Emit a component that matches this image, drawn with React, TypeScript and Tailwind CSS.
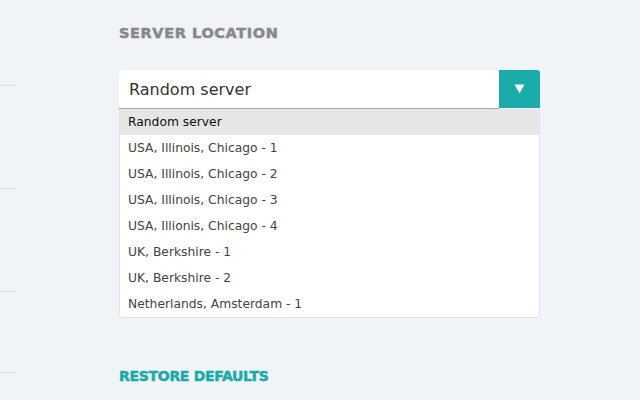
import React from "react";

const items = [
  "Random server",
  "USA, Illinois, Chicago - 1",
  "USA, Illinois, Chicago - 2",
  "USA, Illinois, Chicago - 3",
  "USA, Illionis, Chicago - 4",
  "UK, Berkshire - 1",
  "UK, Berkshire - 2",
  "Netherlands, Amsterdam - 1",
];

export default function App() {
  return (
    <div
      className="w-[640px] h-[400px] bg-[#f0f3f7] flex overflow-hidden"
      style={{ fontFamily: "'DejaVu Sans', sans-serif" }}
    >
      <div className="w-4 flex flex-col">
        <div className="h-[85px]" />
        <div className="h-px bg-[#dcdde2]" />
        <div className="h-[102px]" />
        <div className="h-px bg-[#dcdde2]" />
        <div className="h-[102px]" />
        <div className="h-px bg-[#dcdde2]" />
        <div className="h-[80px]" />
        <div className="h-px bg-[#dcdde2]" />
      </div>
      <div className="ml-[103px] w-[421px] flex flex-col">
        <div className="mt-[24px] h-[18px] text-[14.5px] leading-[18px] font-extrabold text-[#888888] tracking-[0.6px] [-webkit-text-stroke:0.5px_#888888]">
          SERVER LOCATION
        </div>
        <div className="mt-[28px] flex h-[39px]">
          <div className="flex-1 bg-white rounded-tl-[3px] border-b border-[#a9a9a9] flex items-center pl-[10px] pt-[1px] text-[16px] text-[#333333]">
            Random server
          </div>
          <div className="w-[41px] h-[38px] bg-[#1aaca8] rounded-tr-[3px] flex items-center justify-center">
            <svg width="11" height="10" viewBox="0 0 11 10">
              <path d="M0.5 0.5 H10.5 L5.5 9.5 Z" fill="white" />
            </svg>
          </div>
        </div>
        <div className="bg-white border border-t-0 border-[#dfe2e6] rounded-b-[4px] flex flex-col">
          {items.map((t, i) => (
            <div
              key={t}
              className={`h-[26px] flex items-center pl-[8px] text-[12.3px] ${
                i === 0 ? "bg-[#e6e6e6] text-[#111111]" : "text-[#444444]"
              }`}
            >
              {t}
            </div>
          ))}
        </div>
        <div className="mt-[49px] text-[14px] leading-[18px] font-extrabold text-[#1aaba7] tracking-[-0.3px] [-webkit-text-stroke:0.5px_#1aaba7]">
          RESTORE DEFAULTS
        </div>
      </div>
    </div>
  );
}
